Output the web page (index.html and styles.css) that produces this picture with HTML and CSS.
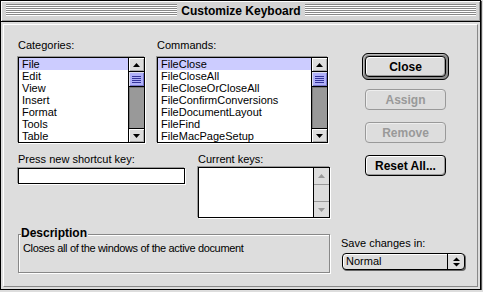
FILE: index.html
```html
<!DOCTYPE html>
<html lang="en">
<head>
    <meta charset="UTF-8">
    <title>Customize Keyboard</title>
    <link rel="stylesheet" href="styles.css">
</head>
<body>
    <div class="window">
        <div class="titlebar">
            <div class="stripes"></div>
            <div class="title">Customize Keyboard</div>
            <div class="stripes"></div>
        </div>
        <div class="pane">
            <div class="left">
                <div class="lists">
                    <div class="categories">
                        <div class="label">Categories:</div>
                        <div class="listbox">
                            <ul class="items">
                                <li class="selected">File</li>
                                <li>Edit</li>
                                <li>View</li>
                                <li>Insert</li>
                                <li>Format</li>
                                <li>Tools</li>
                                <li>Table</li>
                            </ul>
                            <div class="scrollbar">
                                <div class="arrow up"><svg width="7" height="4"><polygon points="0,4 7,4 3.5,0"/></svg></div>
                                <div class="thumb"><span></span><span></span><span></span><span></span></div>
                                <div class="track"></div>
                                <div class="arrow down"><svg width="7" height="4"><polygon points="0,0 7,0 3.5,4"/></svg></div>
                            </div>
                        </div>
                    </div>
                    <div class="commands">
                        <div class="label">Commands:</div>
                        <div class="listbox">
                            <ul class="items">
                                <li class="selected">FileClose</li>
                                <li>FileCloseAll</li>
                                <li>FileCloseOrCloseAll</li>
                                <li>FileConfirmConversions</li>
                                <li>FileDocumentLayout</li>
                                <li>FileFind</li>
                                <li>FileMacPageSetup</li>
                            </ul>
                            <div class="scrollbar">
                                <div class="arrow up"><svg width="7" height="4"><polygon points="0,4 7,4 3.5,0"/></svg></div>
                                <div class="thumb"><span></span><span></span><span></span><span></span></div>
                                <div class="track"></div>
                                <div class="arrow down"><svg width="7" height="4"><polygon points="0,0 7,0 3.5,4"/></svg></div>
                            </div>
                        </div>
                    </div>
                </div>

                <div class="keys">
                    <div class="shortcut">
                        <div class="label">Press new shortcut key:</div>
                        <div class="textbox"></div>
                    </div>
                    <div class="current">
                        <div class="label">Current keys:</div>
                        <div class="listbox">
                            <div class="items"></div>
                            <div class="scrollbar disabled">
                                <div class="arrow up"><svg width="7" height="4"><polygon points="0,4 7,4 3.5,0"/></svg></div>
                                <div class="track"></div>
                                <div class="arrow down"><svg width="7" height="4"><polygon points="0,0 7,0 3.5,4"/></svg></div>
                            </div>
                        </div>
                    </div>
                </div>

                <div class="group">
                    <span class="group-title">Description</span>
                    <p>Closes all of the windows of the active document</p>
                </div>
            </div>

            <div class="right">
                <div class="default-ring"><button class="btn">Close</button></div>
                <button class="btn disabled">Assign</button>
                <button class="btn disabled">Remove</button>
                <button class="btn">Reset All...</button>
                <div class="save">
                    <div class="label">Save changes in:</div>
                    <div class="popup">
                        <span class="popup-text">Normal</span>
                        <span class="popup-arrows"><svg width="7" height="10"><polygon points="0,4 7,4 3.5,0.5"/><polygon points="0,6 7,6 3.5,9.5"/></svg></span>
                    </div>
                </div>
            </div>
        </div>
    </div>
</body>
</html>
```

FILE: styles.css
```css
body {
    margin: 0;
    background-color: #ddd;
    font-family: "Liberation Sans", Arial, sans-serif;
    font-size: 11px;
    line-height: 12px;
    color: #000;
}

.window {
    width: 481px;
    height: 290px;
    box-sizing: border-box;
    border: 1px solid #000;
    background-color: #ddd;
    display: flex;
    flex-direction: column;
    box-shadow: 1px 1px 0 #555;
}

/* title bar */
.titlebar {
    flex: none;
    height: 20px;
    display: flex;
    padding: 0 4px 0 5px;
    border-bottom: 1px solid #000;
    background-color: #d4d4d4;
    box-shadow: inset 1px 1px 0 #fff, inset -1px -1px 0 #999;
}

.stripes {
    flex: 1;
    height: 12px;
    margin-top: 3px;
    background: repeating-linear-gradient(#888 0 1px, #fff 1px 2px);
}

.title {
    padding: 0 4px;
    font-size: 12px;
    font-weight: bold;
    line-height: 20px;
}

/* dialog body */
.pane {
    flex: 1;
    margin: 2px;
    border: 1px solid;
    border-color: #fff #888 #888 #fff;
    display: flex;
    padding: 14px 0 0 14px;
}

.left {
    width: 312px;
}

.lists {
    display: flex;
    gap: 12px;
}

.categories {
    width: 127px;
}

.commands {
    width: 171px;
}

.label {
    white-space: nowrap;
}

.listbox {
    margin-top: 6px;
    height: 86px;
    box-sizing: border-box;
    border: 1px solid #000;
    background-color: #fff;
    display: flex;
    box-shadow: -1px -1px 0 #999, 1px 1px 0 #fff;
}

.items {
    flex: 1;
    list-style: none;
    margin: 0;
    padding: 0;
    overflow: hidden;
}

.items li {
    height: 12px;
    padding-left: 3px;
    white-space: nowrap;
}

.items li.selected {
    background-color: #ccf;
}

.scrollbar {
    width: 15px;
    border-left: 1px solid #000;
    display: flex;
    flex-direction: column;
    background-color: #ddd;
}

.arrow {
    height: 13px;
    display: flex;
    align-items: center;
    justify-content: center;
    background-color: #ddd;
    box-shadow: inset 1px 1px 0 #fff, inset -1px -1px 0 #aaa;
}

.arrow.up {
    border-bottom: 1px solid #000;
}

.arrow.down {
    border-top: 1px solid #000;
}

.thumb {
    height: 14px;
    border-bottom: 1px solid #000;
    background-color: #b0b0f8;
    display: flex;
    flex-direction: column;
    align-items: center;
    justify-content: center;
    gap: 1px;
    box-shadow: inset 1px 1px 0 #dde, inset -1px -1px 0 #77c;
}

.thumb span {
    width: 9px;
    height: 1px;
    background-color: #339;
}

.track {
    flex: 1;
    background-color: #999;
    box-shadow: inset 1px 1px 0 #777;
}

/* shortcut row */
.keys {
    display: flex;
    margin-top: 10px;
}

.shortcut {
    width: 167px;
}

.textbox {
    margin-top: 3px;
    height: 16px;
    box-sizing: border-box;
    border: 1px solid #000;
    background-color: #fff;
    box-shadow: -1px -1px 0 #999, 1px 1px 0 #fff;
}

.current {
    width: 132px;
    margin-left: 13px;
}

.current .listbox {
    margin-top: 2px;
    height: 51px;
}

.scrollbar.disabled {
    border-left-color: #000;
}

.scrollbar.disabled .arrow {
    height: 16px;
    fill: #999;
    box-shadow: none;
}

.scrollbar.disabled .arrow.up {
    border-bottom-color: #999;
}

.scrollbar.disabled .arrow.down {
    height: 15px;
    border-top-color: #999;
}

.scrollbar.disabled .track {
    background-color: #ddd;
    box-shadow: none;
}

/* description */
.group {
    position: relative;
    margin-top: 16px;
    height: 39px;
    box-sizing: border-box;
    border: 1px solid #888;
    padding: 7px 4px 0;
    box-shadow: 1px 1px 0 #fff, inset 1px 1px 0 #fff;
}

.group-title {
    position: absolute;
    top: -8px;
    left: 2px;
    font-size: 12px;
    font-weight: bold;
    line-height: 12px;
    background-color: #ddd;
    padding-right: 1px;
}

.group p {
    margin: 0;
    letter-spacing: -0.35px;
    white-space: nowrap;
}

/* buttons column */
.right {
    margin-left: 11px;
    width: 124px;
    display: flex;
    flex-direction: column;
    align-items: flex-start;
}

.default-ring {
    margin-top: 14px;
    margin-left: 21px;
    display: flex;
    padding: 2px;
    border: 1px solid #000;
    border-radius: 6px;
    background-color: #8c8c8c;
    box-shadow: inset 1px 1px 0 #bbb;
}

.btn {
    width: 81px;
    height: 21px;
    box-sizing: border-box;
    padding: 0;
    border: 1px solid #000;
    border-radius: 4px;
    background-color: #ddd;
    font-family: "Liberation Sans", Arial, sans-serif;
    font-size: 12px;
    font-weight: bold;
    color: #000;
    box-shadow: inset 1px 1px 0 #fff, inset -1px -1px 0 #999;
}

.right > .btn {
    margin-left: 24px;
    margin-top: 12px;
}

.right > .default-ring + .btn {
    margin-top: 9px;
}

.btn.disabled {
    border-color: #999;
    color: #999;
    box-shadow: inset 1px 1px 0 #eee;
}

.save {
    margin-top: 61px;
}

.popup {
    margin-top: 4px;
    margin-left: 1px;
    width: 123px;
    height: 17px;
    box-sizing: border-box;
    border: 1px solid #000;
    border-radius: 4px;
    display: flex;
    background-color: #ddd;
    box-shadow: inset 1px 1px 0 #fff, 1px 1px 0 #666;
}

.popup-text {
    flex: 1;
    padding-left: 3px;
    line-height: 15px;
}

.popup-arrows {
    width: 16px;
    border-left: 1px solid #000;
    display: flex;
    align-items: center;
    justify-content: center;
}
```
